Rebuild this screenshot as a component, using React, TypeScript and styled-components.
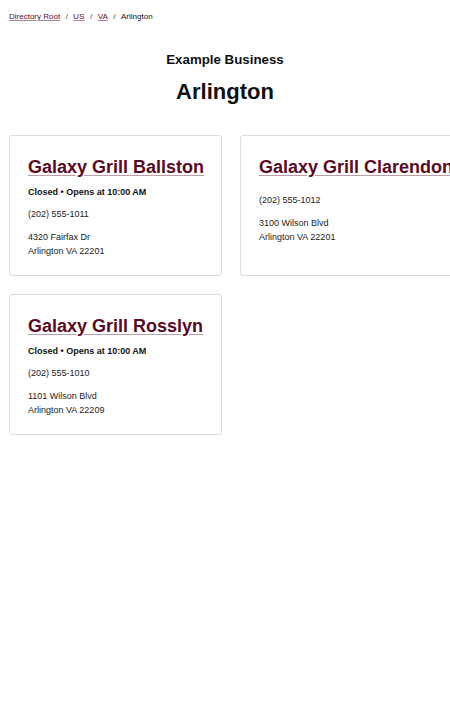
import styled, { createGlobalStyle } from 'styled-components'

const GlobalStyle = createGlobalStyle`
  html, body {
    margin: 0;
    padding: 0;
    overflow-x: hidden;
    background: #fff;
    color: #111;
    font-family: "Liberation Sans", Arial, sans-serif;
  }
`

const brand = '#5a0a1f'

const Page = styled.div`
  padding: 11px 9px 40px;
`

const Breadcrumbs = styled.nav`
  display: flex;
  align-items: center;
  gap: 5.5px;
  font-size: 8px;
  line-height: 12px;
`

const Crumb = styled.a`
  color: ${brand};
  text-decoration: underline;
  text-decoration-color: rgba(90, 10, 31, 0.5);
`

const Current = styled.span`
  color: #111;
`

const Slash = styled.span`
  color: #333;
`

const Header = styled.header`
  display: flex;
  flex-direction: column;
  align-items: center;
  margin-top: 29px;
  margin-bottom: 30px;
`

const Brand = styled.h2`
  margin: 0;
  font-size: 13.3px;
  line-height: 16px;
  font-weight: bold;
`

const Title = styled.h1`
  margin: 11px 0 0;
  font-size: 22px;
  line-height: 26px;
  font-weight: bold;
`

const Grid = styled.div`
  display: grid;
  grid-template-columns: repeat(2, 213px);
  column-gap: 18px;
  row-gap: 18px;
`

const Card = styled.article`
  box-sizing: border-box;
  border: 1px solid #dcdcdc;
  border-radius: 3px;
  padding: 19px 18px 17px;
  white-space: nowrap;
`

const CardTitle = styled.a`
  display: block;
  margin-bottom: 7px;
  color: ${brand};
  font-size: 18px;
  line-height: 24px;
  font-weight: bold;
  text-decoration: underline;
  text-decoration-color: rgba(90, 10, 31, 0.4);
  text-underline-offset: 2px;
`

const Status = styled.p`
  margin: 0 0 10px;
  font-size: 9px;
  line-height: 12px;
  font-weight: bold;
`

const Phone = styled.p<{ $alone?: boolean }>`
  margin: ${p => (p.$alone ? '15px' : '0')} 0 0;
  font-size: 9px;
  line-height: 12px;
  color: #222;
`

const Address = styled.p`
  margin: 10px 0 0;
  font-size: 9px;
  line-height: 14px;
  color: #222;
`

type Location = {
  name: string
  status?: string
  phone: string
  street: string
  city: string
}

const locations: Location[] = [
  {
    name: 'Galaxy Grill Ballston',
    status: 'Closed • Opens at 10:00 AM',
    phone: '(202) 555-1011',
    street: '4320 Fairfax Dr',
    city: 'Arlington VA 22201'
  },
  {
    name: 'Galaxy Grill Clarendon',
    phone: '(202) 555-1012',
    street: '3100 Wilson Blvd',
    city: 'Arlington VA 22201'
  },
  {
    name: 'Galaxy Grill Rosslyn',
    status: 'Closed • Opens at 10:00 AM',
    phone: '(202) 555-1010',
    street: '1101 Wilson Blvd',
    city: 'Arlington VA 22209'
  }
]

const LocationCard = ({ loc }: { loc: Location }) => (
  <Card>
    <CardTitle href="#">{loc.name}</CardTitle>
    {loc.status && <Status>{loc.status}</Status>}
    <Phone $alone={!loc.status}>{loc.phone}</Phone>
    <Address>
      {loc.street}
      <br />
      {loc.city}
    </Address>
  </Card>
)

export default function App() {
  return (
    <>
      <GlobalStyle />
      <Page>
        <Breadcrumbs>
          <Crumb href="#">Directory Root</Crumb>
          <Slash>/</Slash>
          <Crumb href="#">US</Crumb>
          <Slash>/</Slash>
          <Crumb href="#">VA</Crumb>
          <Slash>/</Slash>
          <Current>Arlington</Current>
        </Breadcrumbs>
        <Header>
          <Brand>Example Business</Brand>
          <Title>Arlington</Title>
        </Header>
        <Grid>
          {locations.map(loc => (
            <LocationCard key={loc.name} loc={loc} />
          ))}
        </Grid>
      </Page>
    </>
  )
}
